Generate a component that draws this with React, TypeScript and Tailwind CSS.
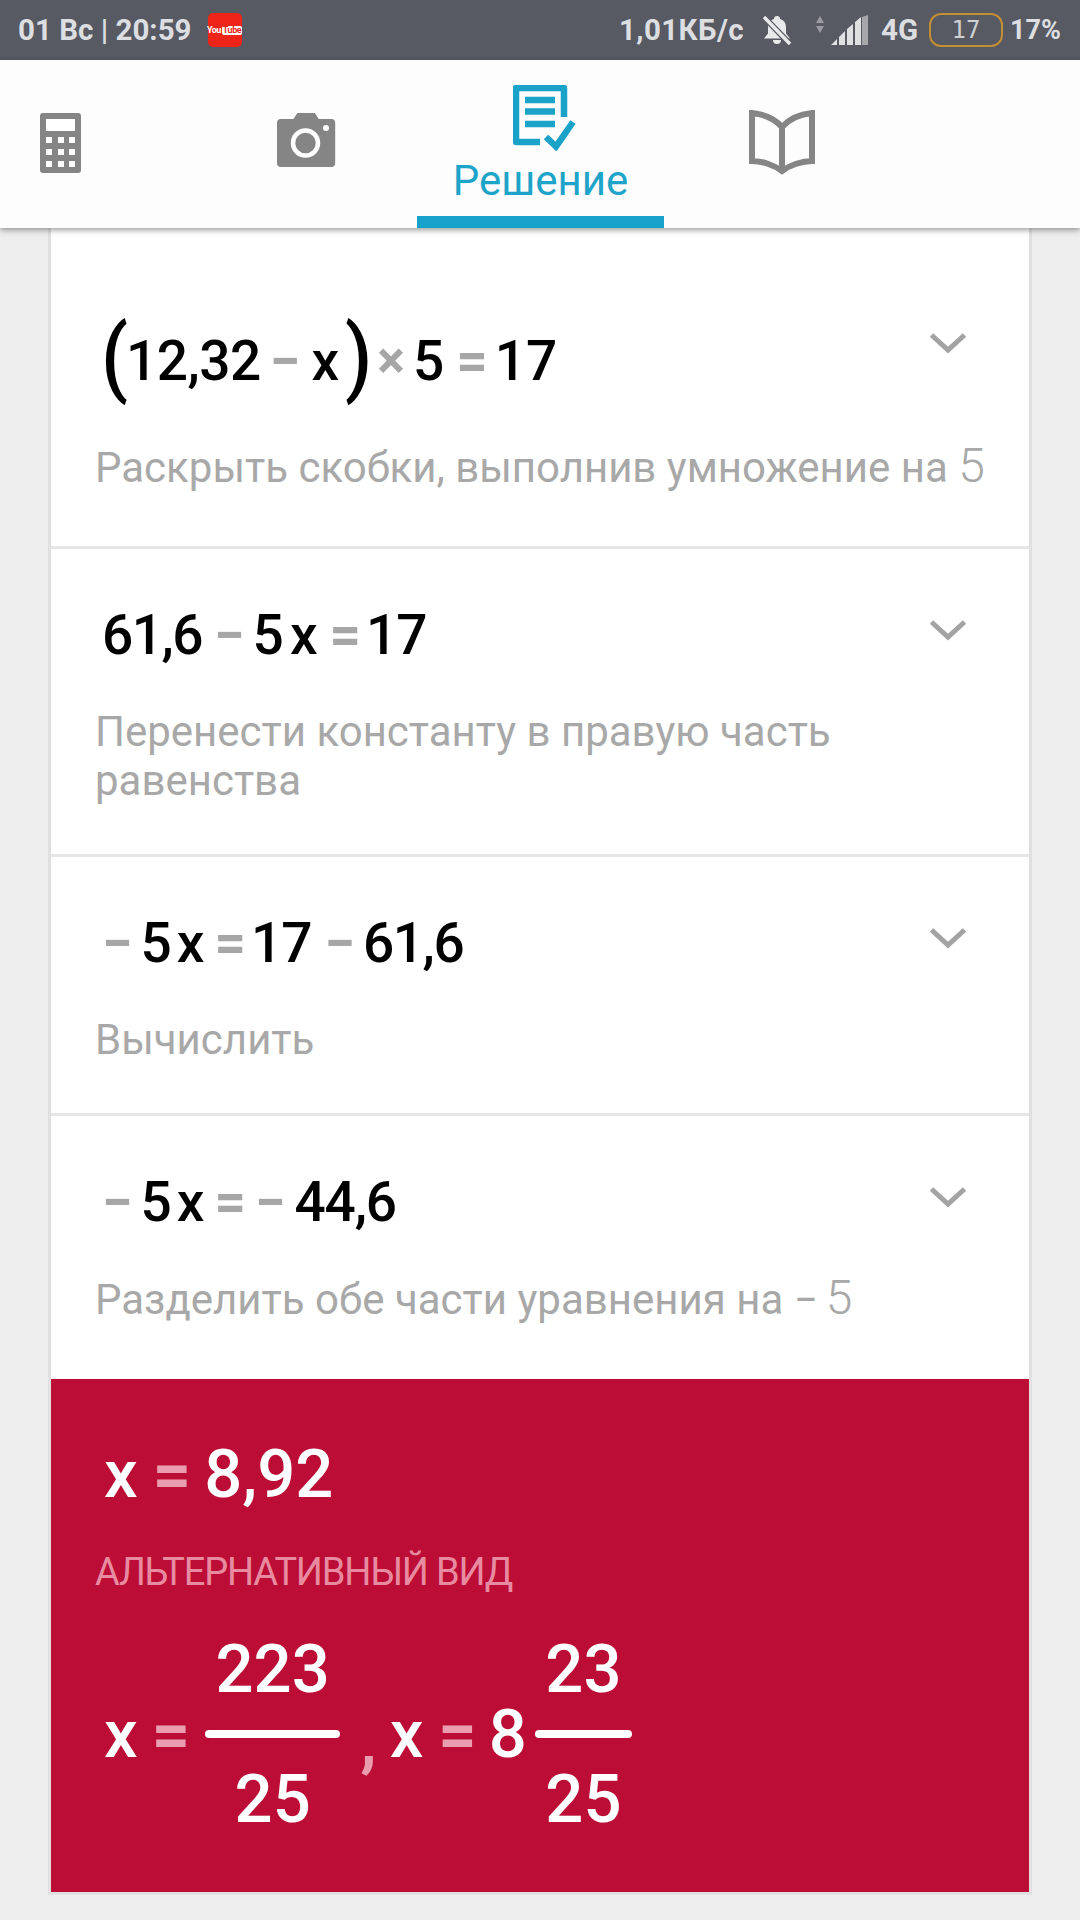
import React from "react";

const F = { fontFamily: "Roboto, 'Noto Sans', sans-serif" };

function Op({ c, red, cls = "" }: { c: string; red?: boolean; cls?: string }) {
  return <span className={`font-bold ${red ? "text-[#eb9db0]" : "text-[#a6a6a6]"} ${cls}`}>{c}</span>;
}

function Chevron() {
  return (
    <svg width="38" height="22" viewBox="0 0 38 22" className="block">
      <path d="M2.5 3 L19 18 L35.5 3" fill="none" stroke="#a3a3a3" strokeWidth="5" />
    </svg>
  );
}

function Row({ math, desc, h, pt, gap, border = true }: { math: React.ReactNode; desc: React.ReactNode; h: string; pt: string; gap: string; border?: boolean }) {
  return (
    <div className={`relative flex flex-col ${h} ${pt} pl-[44px] pr-[26px] ${border ? "border-b-[3px] border-[#e6e6e6]" : ""}`}>
      <div className="flex items-center h-[60px] pl-[7px] text-[55px] text-black font-medium leading-none">{math}</div>
      <div className={`${gap} flex items-baseline text-[42px] leading-[49px] text-[#a8a8a8] whitespace-pre`}>{desc}</div>
    </div>
  );
}

function Frac({ top, bottom, w }: { top: string; bottom: string; w: string }) {
  return (
    <div className={`flex flex-col items-center ${w}`}>
      <div className="leading-none h-[66px]">{top}</div>
      <div className="w-full h-[8px] rounded-full bg-white my-[28px]"></div>
      <div className="leading-none h-[66px]">{bottom}</div>
    </div>
  );
}

export default function App() {
  return (
    <div style={F} className="w-[1080px] h-[1920px] overflow-hidden bg-[#eeeeee] flex flex-col">
      <div className="h-[60px] bg-[#575a62] flex items-center justify-between pl-[18px] pr-[19px] text-[#dcdee1] text-[29.5px] font-bold shrink-0">
        <div className="flex items-center">
          <span>01 Вс | 20:59</span>
          <span className="ml-[16px] w-[34px] h-[34px] rounded-[5px] bg-[#ee2418] flex items-center justify-center text-white text-[9px] leading-none font-bold tracking-[-0.5px]">
            You<span className="ml-[1px] px-[1px] bg-white text-[#ee2418] rounded-[2px]">Tube</span>
          </span>
        </div>
        <div className="flex items-center">
          <span className="tracking-[0.4px]">1,01КБ/с</span>
          <svg width="30" height="32" viewBox="0 0 30 32" className="ml-[18px]">
            <path d="M15 2a3 3 0 0 1 3 3c4 1 6 4.400 6 8.500v6l4 5H2l4-5v-6c0-4 2-7.500 6-8.500a3 3 0 0 1 3-3Z" fill="#e8e9eb" />
            <path d="M11 26h8a4 4 0 0 1-8 0Z" fill="#e8e9eb" />
            <path d="M2 3l26 27" stroke="#575a62" strokeWidth="6" />
            <path d="M2 3l26 27" stroke="#e8e9eb" strokeWidth="3.500" />
          </svg>
          <svg width="12" height="18" viewBox="0 0 12 18" className="ml-[22px] -mt-[10px]">
            <path d="M6 0l4 7H2zM2 10h8l-4 7z" fill="#9a9ca1" />
          </svg>
          <svg width="38" height="30" viewBox="0 0 38 30" className="ml-[5px]">
            <path d="M0 30l6-6v6zM8 30v-8l6-6v14zM16 30V14l6-5v21zM24 30V7l6-5v28z" fill="#dfe0e2" />
            <path d="M31 30V2l6-2v30z" fill="#a6a7aa" />
          </svg>
          <span className="ml-[12px]">4G</span>
          <span className="ml-[11px] w-[74px] h-[34px] border-[2px] border-[#c48e35] rounded-[12px] flex items-center justify-center font-normal text-[24px] leading-none text-[#cfd0d3]" style={{ fontFamily: "'DejaVu Sans Mono', monospace" }}>17</span>
          <span className="ml-[7px] text-[27px]">17%</span>
        </div>
      </div>

      <div className="relative z-10 h-[168px] bg-[#fdfdfd] shadow-[0_2px_6px_rgba(0,0,0,0.4)] shrink-0 flex">
        <div className="w-[121px] flex justify-center pt-[53px]">
          <svg width="42" height="60" viewBox="0 0 42 60">
            <rect width="41" height="60" rx="3" fill="#858585" />
            <rect x="6" y="6" width="29" height="12" fill="#fff" />
            {[24, 36, 48].map((y) => [6, 18, 29].map((x) => <rect key={`${x}-${y}`} x={x} y={y} width="6" height="6" fill="#fff" />))}
          </svg>
        </div>
        <div className="w-[240px] ml-[65px] flex justify-center pt-[53px]">
          <svg width="60" height="54" viewBox="0 0 60 54">
            <path d="M4 6h13l4-6h18l4 6h13a4 4 0 0 1 4 4v40a4 4 0 0 1-4 4H4a4 4 0 0 1-4-4V10a4 4 0 0 1 4-4Z" fill="#858585" transform="translate(1 0) scale(0.97 1)" />
            <circle cx="29.500" cy="30" r="12.500" fill="none" stroke="#fff" strokeWidth="4.500" />
            <circle cx="50" cy="15" r="3" fill="#fff" />
          </svg>
        </div>
        <div className="w-[247px] -ml-[9px] relative flex flex-col items-center border-b-[12px] border-[#17a2cb]">
          <svg width="64" height="66" viewBox="0 0 64 66" className="mt-[25px] ml-[9px] shrink-0">
            <path d="M51 32V3H3v54h24" fill="none" stroke="#1ba2c8" strokeWidth="6.500" strokeLinejoin="round" />
            <path d="M12 15h30M12 26.500h30M12 39h30" stroke="#1ba2c8" strokeWidth="6.500" fill="none" />
            <path d="M33 52l10 9.500L60 37" stroke="#1ba2c8" strokeWidth="6.500" fill="none" />
          </svg>
          <div className="text-[#1ea3c9] text-[42px] leading-none mt-[9px]">Решение</div>
        </div>
        <div className="w-[236px] flex justify-center pt-[50px]">
          <svg width="66" height="66" viewBox="0 0 66 66">
            <path d="M33 61C25 55 13 51 3 51V3c10 1 22 5 30 14 8-9 20-13 30-14v48C53 51 41 55 33 61Zm0 0V17" fill="none" stroke="#858585" strokeWidth="6" />
          </svg>
        </div>
      </div>

      <div className="ml-[48px] w-[984px] border-x-[3px] border-b-[3px] border-[#e0e0e0] bg-white flex flex-col">
        <div className="relative">
          <div className="absolute right-[62px] top-[104px]"><Chevron /></div>
          <Row h="h-[321px]" pt="pt-[103px]" gap="mt-[50px]" math={
            <>
              <span className="text-[78px] leading-none font-medium -mt-[8px] -ml-[1px] scale-y-[1.1]">(</span>
              <span className="-ml-[2px] tracking-[-0.5px]">12,32</span>
              <Op c="−" cls="ml-[9px]" />
              <span className="ml-[11px]">x</span>
              <span className="text-[78px] leading-none font-medium -mt-[8px] ml-[6px] scale-y-[1.1]">)</span>
              <Op c="×" cls="ml-[5px] text-[52px]" />
              <span className="ml-[8px]">5</span>
              <Op c="=" cls="ml-[12px]" />
              <span className="ml-[7px]">17</span>
            </>
          } desc={<><span>Раскрыть скобки, выполнив умножение на </span><span className="text-[48px] font-light">5</span></>} />
        </div>
        <div className="relative">
          <div className="absolute right-[62px] top-[70px]"><Chevron /></div>
          <Row h="h-[308px]" pt="pt-[56px]" gap="mt-[42px]" math={
            <>
              <span className="tracking-[-1.5px]">61,6</span>
              <Op c="−" cls="ml-[12px]" />
              <span className="ml-[8px]">5</span>
              <span className="ml-[6px]">x</span>
              <Op c="=" cls="ml-[12px]" />
              <span className="ml-[5px] tracking-[-1px]">17</span>
            </>
          } desc={"Перенести константу в правую часть\nравенства"} />
        </div>
        <div className="relative">
          <div className="absolute right-[62px] top-[70px]"><Chevron /></div>
          <Row h="h-[259px]" pt="pt-[56px]" gap="mt-[42px]" math={
            <>
              <Op c="−" />
              <span className="ml-[8px]">5</span>
              <span className="ml-[5px]">x</span>
              <Op c="=" cls="ml-[10px]" />
              <span className="ml-[5px] tracking-[-1px]">17</span>
              <Op c="−" cls="ml-[13px]" />
              <span className="ml-[8px] tracking-[-1.5px]">61,6</span>
            </>
          } desc="Вычислить" />
        </div>
        <div className="relative">
          <div className="absolute right-[62px] top-[70px]"><Chevron /></div>
          <Row h="h-[263px]" pt="pt-[56px]" gap="mt-[41px]" border={false} math={
            <>
              <Op c="−" />
              <span className="ml-[8px]">5</span>
              <span className="ml-[5px]">x</span>
              <Op c="=" cls="ml-[10px]" />
              <Op c="−" cls="ml-[9px]" />
              <span className="ml-[9px] tracking-[-1.200px]">44,6</span>
            </>
          } desc={<><span>Разделить обе части уравнения на −</span><span className="ml-[8px] text-[48px] font-light">5</span></>} />
        </div>
        <div className="h-[513px] bg-[#bb0d35] text-white pl-[44px] pt-[60px]">
          <div className="flex items-center h-[70px] pl-[9px] text-[67px] font-medium leading-none">
            <span>x</span>
            <Op c="=" red cls="ml-[15px]" />
            <span className="ml-[13px]">8,92</span>
          </div>
          <div className="mt-[43px] text-[38px] leading-[40px] text-[#e88ba1] tracking-[-1.2px] whitespace-nowrap">АЛЬТЕРНАТИВНЫЙ ВИД</div>
          <div className="mt-[44px] flex items-center pl-[9px] text-[67px] font-medium leading-none">
            <span>x</span>
            <Op c="=" red cls="ml-[14px]" />
            <Frac top="223" bottom="25" w="w-[135px] ml-[15px]" />
            <Op c="," red cls="ml-[20px] mt-[14px]" />
            <span className="ml-[13px]">x</span>
            <Op c="=" red cls="ml-[15px]" />
            <span className="ml-[12px]">8</span>
            <Frac top="23" bottom="25" w="w-[97px] ml-[8px]" />
          </div>
        </div>
      </div>
    </div>
  );
}
